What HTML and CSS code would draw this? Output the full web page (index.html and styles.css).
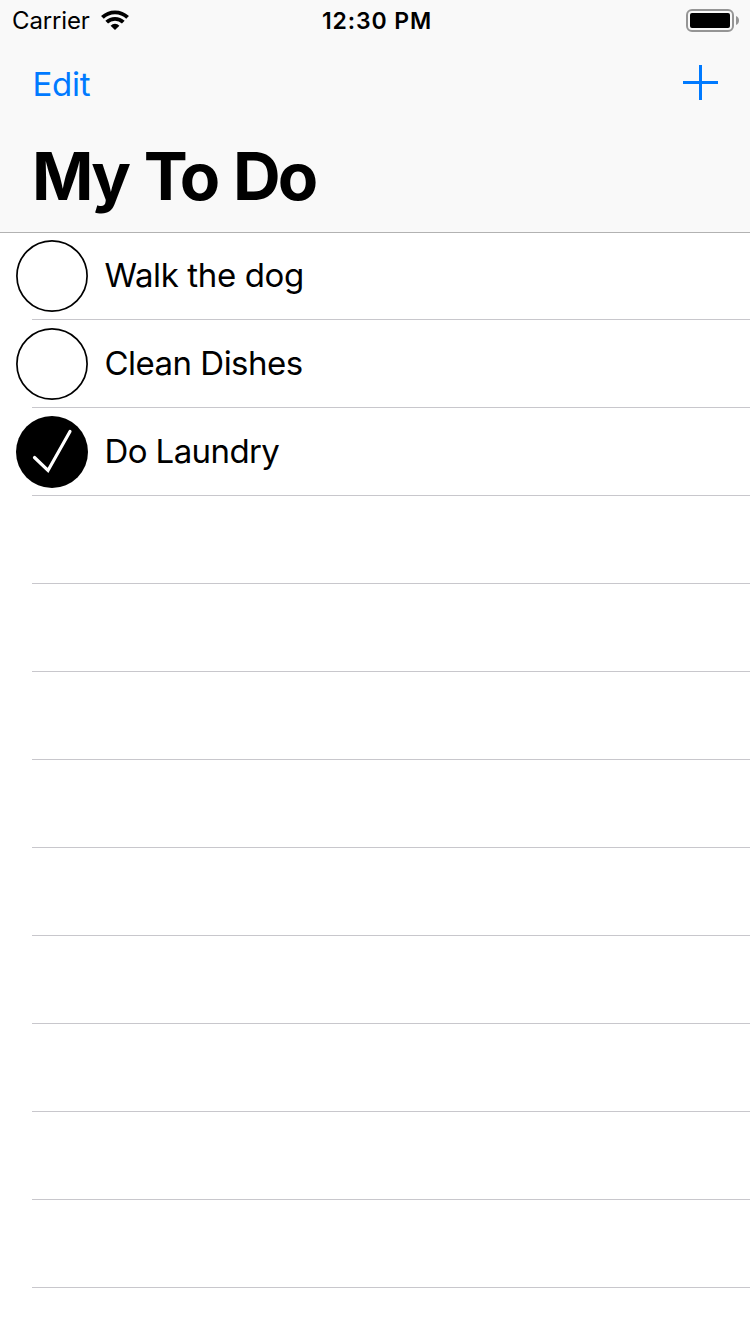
FILE: index.html
```html
<!DOCTYPE html>
<html lang="en">
<head>
<meta charset="utf-8">
<title>My To Do</title>
<link rel="stylesheet" href="styles.css">
</head>
<body>
<header class="header">
  <div class="status">
    <div class="carrier">
      <span class="carrier-name">Carrier</span>
      <svg class="wifi" width="28" height="20" viewBox="0 0 28 20">
        <g fill="none" stroke="#000" stroke-width="3.9">
          <path d="M1.4 7.4a18.200 18.200 0 0 1 25.2 0"/>
          <path d="M5.700 12.200a12 12 0 0 1 16.600 0"/>
        </g>
        <path d="M14 20l-4.400-4.300a6.200 6.200 0 0 1 8.800 0z"/>
      </svg>
    </div>
    <span class="time">12:30 PM</span>
    <svg class="battery" width="54" height="23" viewBox="0 0 54 23">
      <rect x="1" y="1" width="46" height="21" rx="5" fill="none" stroke="#959595" stroke-width="2"/>
      <rect x="4" y="4" width="40" height="15" rx="2" fill="#000"/>
      <path d="M50 7c4 1.500 4 7.500 0 9z" fill="#959595"/>
    </svg>
  </div>
  <nav class="nav">
    <a class="edit">Edit</a>
    <svg class="add" width="35" height="35" viewBox="0 0 35 35">
      <path d="M16 0h3v16h16v3H19v16h-3V19H0v-3h16z" fill="#007aff"/>
    </svg>
  </nav>
  <h1 class="title">My To Do</h1>
</header>
<main class="list">
  <div class="row">
    <svg class="check" width="72" height="72" viewBox="0 0 72 72"><circle cx="36" cy="36" r="35.1" fill="none" stroke="#000" stroke-width="1.7"/></svg>
    <span class="label walk">Walk the dog</span>
  </div>
  <div class="row">
    <svg class="check" width="72" height="72" viewBox="0 0 72 72"><circle cx="36" cy="36" r="35.1" fill="none" stroke="#000" stroke-width="1.7"/></svg>
    <span class="label clean">Clean Dishes</span>
  </div>
  <div class="row">
    <svg class="check" width="72" height="72" viewBox="0 0 72 72"><circle cx="36" cy="36" r="36"/><path d="M18.500 41.500L32 54.500L54 15.500" fill="none" stroke="#fff" stroke-width="3.200" stroke-linecap="round"/></svg>
    <span class="label laundry">Do Laundry</span>
  </div>
  <div class="row"></div>
  <div class="row"></div>
  <div class="row"></div>
  <div class="row"></div>
  <div class="row"></div>
  <div class="row"></div>
  <div class="row"></div>
  <div class="row"></div>
  <div class="row"></div>
</main>
</body>
</html>
```
FILE: styles.css
```css
* { box-sizing: border-box; }
body {
  margin: 0;
  height: 1334px;
  overflow: hidden;
  background: #fff;
  color: #000;
  font-family: Inter, "Liberation Sans", sans-serif;
}
.header {
  height: 232px;
  background: #f9f9f9;
  box-shadow: 0 1px 0 #b2b2b2;
}
.status {
  display: grid;
  grid-template-columns: 1fr auto 1fr;
  align-items: center;
  height: 40px;
  padding: 0 10px 0 12px;
  font-size: 24px;
  line-height: 42px;
}
.carrier { display: flex; align-items: center; gap: 11px; height: 40px; }
.carrier-name { width: 78px; height: 40px; white-space: nowrap; letter-spacing: -0.15px; line-height: 42px; }
.time { height: 40px; padding-left: 2px; font-weight: 600; font-size: 23px; letter-spacing: 0.9px; }
.battery { justify-self: end; }
.nav {
  display: flex;
  justify-content: space-between;
  height: 88px;
  padding: 25px 32px 0 32.5px;
}
.edit { color: #007aff; font-size: 33px; line-height: 38px; letter-spacing: -0.3px; }
.title {
  margin: 0;
  padding-left: 32px;
  font-size: 66px;
  font-weight: 700;
  line-height: 96px;
  letter-spacing: -2.8px;
  word-spacing: 2.6px;
  white-space: nowrap;
}
.row {
  display: flex;
  gap: 16.5px;
  height: 88px;
  padding: 8px 0 0 16px;
  background: linear-gradient(#c8c7cc, #c8c7cc) 32px 87px / 100% 1px no-repeat;
}
.label { font-size: 33px; line-height: 70px; white-space: nowrap; }
.walk { letter-spacing: -0.38px; }
.clean { letter-spacing: -0.52px; }
.laundry { letter-spacing: -0.6px; }
```
